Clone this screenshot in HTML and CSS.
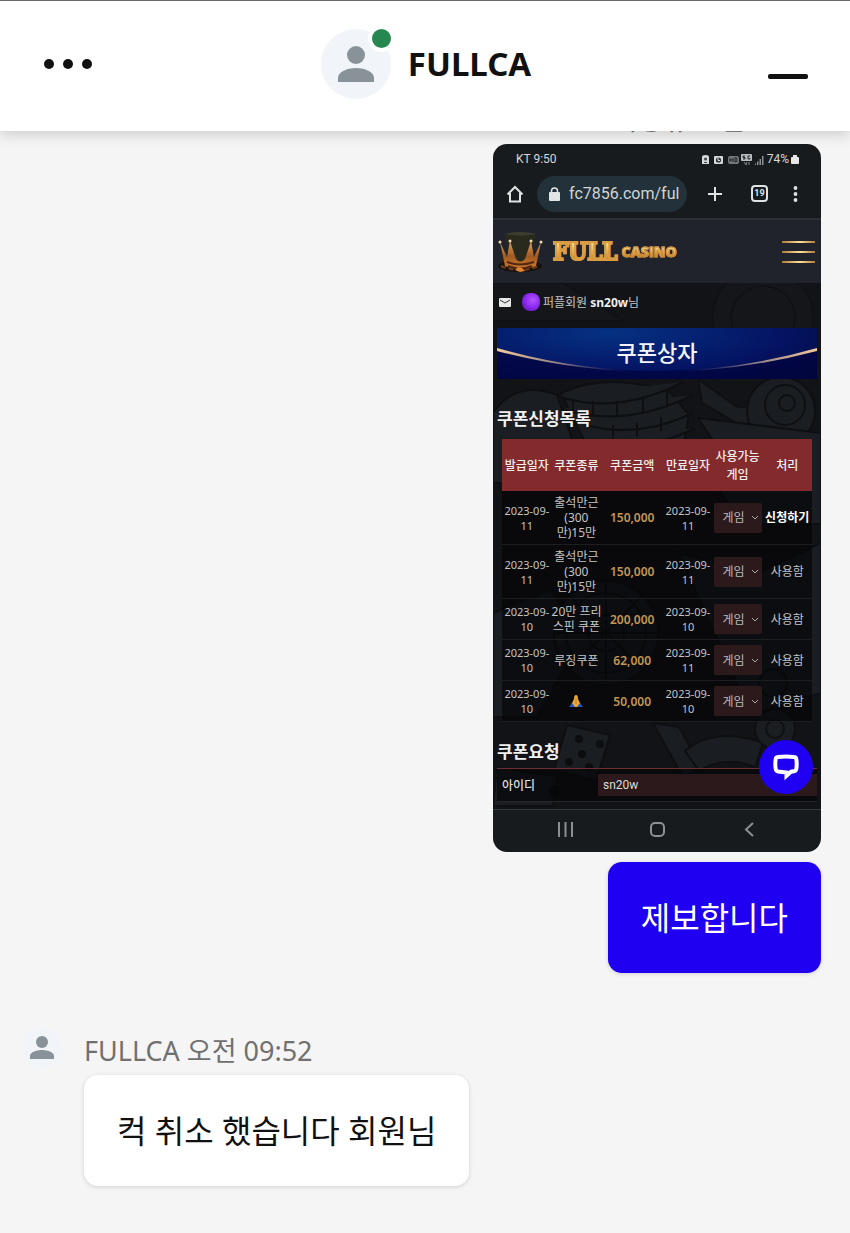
FILE: index.html
```html
<!DOCTYPE html>
<html lang="ko">
<head>
<meta charset="utf-8">
<meta name="viewport" content="width=device-width, initial-scale=1">
<title>FULLCA</title>
<link rel="stylesheet" href="styles.css">
</head>
<body>
<header class="topbar">
  <button class="icon-btn" aria-label="메뉴"><svg width="48" height="12" viewBox="0 0 48 12" fill="#111"><circle cx="5" cy="6" r="5"/><circle cx="24" cy="6" r="5"/><circle cx="43" cy="6" r="5"/></svg></button>
  <div class="agent">
    <div class="avatar">
      <svg width="36" height="36" viewBox="0 0 36 36" fill="#899299"><circle cx="18" cy="9" r="9"/><path d="M0 36v-4c0-7 11-10 18-10s18 3 18 10v4z"/></svg>
      <span class="online"></span>
    </div>
    <h1 class="agent-name">FULLCA</h1>
  </div>
  <button class="icon-btn icon-min" aria-label="최소화"><svg width="40" height="5" viewBox="0 0 40 5"><rect width="40" height="5" rx="2" fill="#111"/></svg></button>
</header>

<main class="chat">
  <section class="group group-own">
    <p class="stamp">사용유 오전 09:50</p>
    <div class="phone">
      <div class="status">
        <span>KT 9:50</span>
        <span class="status-right">
          <svg width="64" height="12" viewBox="0 0 64 12" fill="#d5d8da"><path d="M1 10V3q0-2 3.500-2T8 3v7z"/><circle cx="4.500" cy="5" r="1.500" fill="#444"/><path d="M3 8h3v1H3z" fill="#444"/><rect x="13" y="2" width="9" height="8" rx="1"/><circle cx="17.500" cy="6" r="2.600" fill="#333"/><path d="M17 4v2.500h2" stroke="#ddd" fill="none"/><rect x="27" y="2" width="11" height="8" rx="2" fill="#74787a"/><path d="M29 4v4m3-4v4m-3-2h3m2-2v4q3 0 2-3t-2-1" stroke="#222" fill="none"/><rect x="40" y="0" width="11" height="7" rx="1" fill="#b8bcbe"/><path d="M44 2h-2v1.500h2V5h-2m7-3h-2v3h2V4" stroke="#222" fill="none"/><path d="M43 8l2 3 1-3m2 3V8" stroke="#888" fill="none"/><path d="M54 11V9.500h1V11zm2 0V7.500h1.500V11zm2.500 0V5H60v6zm2.500 0V2h1.500v9z" fill="#8d9193"/></svg>
          <span>74%</span>
          <svg width="8" height="11" viewBox="0 0 8 11" fill="#e6e6e6"><rect y="3" width="8" height="7" rx="1"/><rect x="2" y="1" width="4" height="2"/></svg>
        </span>
      </div>
      <div class="browser">
        <svg width="18" height="18" viewBox="0 0 18 18" fill="none" stroke="#dfe2e3" stroke-width="2"><path d="M1.500 9.500L9 2l7.500 7.500M4 8v8.500h10V8"/></svg>
        <div class="url">
          <svg width="11" height="14" viewBox="0 0 11 14"><rect y="5" width="11" height="9" rx="1" fill="#e2e5e6"/><path d="M2.500 6V4q0-3 3-3t3 3v2" stroke="#e2e5e6" stroke-width="1.500" fill="none"/></svg>
          <span>fc7856.com/ful</span>
        </div>
        <svg width="16" height="16" viewBox="0 0 16 16" stroke="#dfe2e3" stroke-width="2"><path d="M8 1v14M1 8h14"/></svg>
        <span class="tabs">19</span>
        <svg width="5" height="16" viewBox="0 0 5 16" fill="#dfe2e3"><circle cx="2.500" cy="2" r="1.900"/><circle cx="2.500" cy="8" r="1.900"/><circle cx="2.500" cy="14" r="1.900"/></svg>
      </div>
      <div class="brand">
        <svg width="45" height="42" viewBox="0 0 45 42">
          <defs><linearGradient id="g" x2="0" y2="1"><stop stop-color="#e0a05a"/><stop offset=".55" stop-color="#a05a22"/><stop offset="1" stop-color="#d77a2b"/></linearGradient></defs>
          <ellipse cx="22" cy="35" rx="22" ry="6" fill="#15120f"/><path d="M3 35q19 8 38 0" stroke="#7a3c17" stroke-width="2" stroke-dasharray="5 3" fill="none"/>
          <path d="M7 3q15-4 31 0l-5 28H13z" fill="#292a1d"/><path d="M7 3q15-4 31 0-15 3-31 0z" fill="#3d3d30"/>
          <path d="M2 11l7 15 3-16 6 18q4 5 9 0l6-18 3 16 7-15-5 24q-15 6-31 0z" fill="url(#g)"/>
          <path d="M9 31q13 5 27 0M10 35q13 5 24 0" stroke="#4e2913" stroke-width="2" fill="none"/>
          <g fill="#f2d8ad"><circle cx="2" cy="11" r="1.500"/><circle cx="12" cy="10" r="1.500"/><circle cx="33" cy="10" r="1.500"/><circle cx="43" cy="11" r="1.500"/></g><path d="M17 39l3-3 4 1 3 3-5 1z" fill="#e28431"/>
        </svg>
        <span class="word-full">FULL</span><span class="word-casino">CASINO</span>
        <button class="burger" aria-label="사이트 메뉴"><i></i><i></i><i></i></button>
      </div>
      <div class="site">
        <svg class="art" viewBox="0 0 328 526" preserveAspectRatio="xMidYMin slice" fill="none" stroke="#0c0d10" stroke-width="2">
          <g fill="#20242a">
            <g opacity=".4"><path d="M0 0h70l60 38H0z"/><circle cx="270" cy="35" r="50"/><circle cx="270" cy="35" r="32"/></g>
            <path d="M68 110q50-22 110 0l18 22-10 54q-40 20-80 2z"/><path d="M64 113q60 20 126-14M68 126q64 20 132-14M92 142q54 14 108-12M98 157q54 14 104-12M105 172q50 10 94-10M80 116v12m20-10v14m24-14v14m26-16v14m24-20v14m-54 18v14m24-16v14m24-20v14m-64 18v14m28-16v14m28-20v14"/>
            <path d="M205 96l36 26q12 6 24-4l30-26v40l-34 18-52-30z"/><circle cx="288" cy="128" r="34"/><circle cx="292" cy="122" r="20"/><circle cx="294" cy="120" r="8"/>
            <path d="M0 130q24-34 64-18l30 88H0z"/><path d="M205 135l20 30-22 6 46 70h79V150z"/>
            <path d="M0 330l58-24 30 50-44 78H0z"/><circle cx="113" cy="350" r="52"/><circle cx="113" cy="350" r="40"/><circle cx="113" cy="350" r="18"/><path d="M113 298v104M61 350h104M77 313l72 73m0-73l-72 73"/>
            <path d="M186 270l80 20 62-30v150l-70 22z"/><circle cx="280" cy="400" r="14"/>
            <path d="M74 442l43 10-14 46-42-11zM160 440l26 4 22 40-18 10zM4 485l60 8-4 30H0z"/>
            <path d="M192 468q30-25 78-8l-8 24q-30-12-56 4z"/><circle cx="282" cy="446" r="20"/><circle cx="282" cy="446" r="9"/>
          </g>
          <g fill="#090a0c" stroke="none"><circle cx="86" cy="456" r="4"/><circle cx="107" cy="461" r="4"/><circle cx="89" cy="471" r="4"/><circle cx="76" cy="479" r="4"/><circle cx="96" cy="484" r="4"/><circle cx="62" cy="508" r="6"/></g>
        </svg>
        <div class="member">
          <svg width="12" height="9" viewBox="0 0 12 9"><rect width="12" height="9" rx="1" fill="#e9e9e9"/><path d="M1 2l5 3 5-3" stroke="#333" fill="none"/></svg>
          <span class="gem"></span>
          <span>퍼플회원 <b>sn20w</b>님</span>
        </div>
        <div class="banner">
          <svg class="swoosh" viewBox="0 0 320 51" preserveAspectRatio="none">
            <defs><linearGradient id="l"><stop stop-color="#f4c99a"/><stop offset=".2" stop-color="#8e7c86"/><stop offset=".42" stop-color="#233084" stop-opacity="0"/><stop offset=".58" stop-color="#233084" stop-opacity="0"/><stop offset=".8" stop-color="#8e7c86"/><stop offset="1" stop-color="#f4c99a"/></linearGradient></defs>
            <path d="M0 22q160 42 320 0v29H0z" fill="#02043f" opacity=".75"/><path d="M0 20q160 46 320 0v3q-160 42-320 0z" fill="url(#l)"/>
          </svg>
          <h2>쿠폰상자</h2>
        </div>
        <h3 class="heading">쿠폰신청목록</h3>
        <table class="coupons">
          <colgroup><col class="c-date"><col class="c-kind"><col class="c-sum"><col class="c-date"><col class="c-kind"><col class="c-kind"></colgroup>
          <thead><tr><th>발급일자</th><th>쿠폰종류</th><th>쿠폰금액</th><th>만료일자</th><th>사용가능<br>게임</th><th>처리</th></tr></thead>
          <tbody>
            <tr><td class="date">2023-09-<br>11</td><td>출석만근<br>(300<br>만)15만</td><td class="sum">150,000</td><td class="date">2023-09-<br>11</td><td><select aria-label="게임 1"><option>게임</option></select></td><td><button class="apply">신청하기</button></td></tr>
            <tr><td class="date">2023-09-<br>11</td><td>출석만근<br>(300<br>만)15만</td><td class="sum">150,000</td><td class="date">2023-09-<br>11</td><td><select aria-label="게임 2"><option>게임</option></select></td><td>사용함</td></tr>
            <tr><td class="date">2023-09-<br>10</td><td>20만 프리<br>스핀 쿠폰</td><td class="sum">200,000</td><td class="date">2023-09-<br>10</td><td><select aria-label="게임 3"><option>게임</option></select></td><td>사용함</td></tr>
            <tr><td class="date">2023-09-<br>10</td><td>루징쿠폰</td><td class="sum">62,000</td><td class="date">2023-09-<br>11</td><td><select aria-label="게임 4"><option>게임</option></select></td><td>사용함</td></tr>
            <tr><td class="date">2023-09-<br>10</td><td><svg class="pray" width="14" height="13" viewBox="0 0 14 13" role="img" aria-label="기도"><path d="M7 0q2 0 2 4l3 6-3 2H5l-3-2 3-6q0-4 2-4z" fill="#e9a83a"/><path d="M7 3v6" stroke="#c08028"/><path d="M0 12l3-4 3 4zM14 12l-3-4-3 4z" fill="#2454b8"/></svg></td><td class="sum">50,000</td><td class="date">2023-09-<br>10</td><td><select aria-label="게임 5"><option>게임</option></select></td><td>사용함</td></tr>
          </tbody>
        </table>
        <h3 class="heading heading-form">쿠폰요청</h3>
        <div class="field"><label for="uid">아이디</label><input id="uid" type="text" value="sn20w" readonly></div>
        <button class="fab" aria-label="채팅"><svg width="28" height="28" viewBox="0 0 28 28" fill="none" stroke="#fff" stroke-width="4"><path d="M6 4q8-1 16 0 2 0 2.300 2 .8 5 0 10-.3 2-2.300 2.300l-3 .4-4.500 4V19.500l-8.500-1Q4 18 3.700 16q-.8-5 0-10Q4 4 6 4z"/></svg></button>
      </div>
      <div class="navbar">
        <svg width="15" height="15" viewBox="0 0 15 15" stroke="#8d9092" stroke-width="2"><path d="M1 0v15M7.500 0v15M14 0v15"/></svg>
        <svg width="15" height="15" viewBox="0 0 15 15" fill="none" stroke="#8d9092" stroke-width="2"><rect x="1" y="1" width="13" height="13" rx="4"/></svg>
        <svg width="15" height="15" viewBox="0 0 15 15" fill="none" stroke="#8d9092" stroke-width="2"><path d="M11 1L4 7.500l7 6.500"/></svg>
      </div>
    </div>
    <p class="bubble bubble-own">제보합니다</p>
  </section>

  <section class="group group-agent">
    <svg class="mini" width="40" height="48" viewBox="0 0 40 48"><circle cx="20" cy="24" r="20" fill="#f1f5f9"/><g fill="#899299"><circle cx="20" cy="18" r="6"/><path d="M8 35v-3c0-4 7-6 12-6s12 2 12 6v3z"/></g></svg>
    <div class="stack">
      <p class="stamp">FULLCA 오전 09:52</p>
      <p class="bubble">컥 취소 했습니다 회원님</p>
    </div>
  </section>
</main>
</body>
</html>
```
FILE: styles.css
```css
* { box-sizing: border-box; margin: 0; padding: 0; }
body {
  height: 100vh;
  display: flex;
  flex-direction: column;
  overflow: hidden;
  background: #f5f5f5;
  color: #111;
  font-family: "Noto Sans", "Noto Sans CJK KR", sans-serif;
}
button { border: 0; background: none; font: inherit; color: inherit; cursor: pointer; }
svg { display: block; flex: none; }

.topbar {
  flex: none;
  height: 131px;
  padding: 0 41px 4px 43px;
  display: grid;
  grid-template-columns: 1fr auto 1fr;
  align-items: center;
  background: #fff;
  border-top: 1px solid #66666b;
  box-shadow: 0 3px 14px rgba(0, 0, 0, .18);
  position: relative;
  z-index: 2;
}
.icon-btn { justify-self: start; padding: 8px 1px; }
.icon-min { justify-self: end; padding-top: 32px; }
.agent { display: flex; align-items: center; gap: 17px; }
.avatar {
  position: relative;
  width: 70px;
  height: 70px;
  border-radius: 50%;
  background: #f1f5f9;
  display: grid;
  place-items: center;
}
.online {
  position: absolute;
  top: -4px;
  right: -4px;
  width: 27px;
  height: 27px;
  border: 4px solid #fff;
  border-radius: 50%;
  background: #268750;
}
.agent-name { font-size: 33px; line-height: 40px; }

.chat {
  flex: 1;
  min-height: 0;
  padding: 0 29px 47px;
  display: flex;
  flex-direction: column;
  justify-content: flex-end;
  gap: 60px;
}
.group { display: flex; flex: none; }
.group-own { flex-direction: column; align-items: flex-end; }
.group-agent { gap: 22px; margin-left: -7px; align-items: flex-start; }
.mini { margin-top: -9px; }
.stamp { font-size: 27px; line-height: 36px; margin-bottom: 6px; color: #707070; }
.bubble {
  width: fit-content;
  padding: 34px 33px;
  font-size: 32px;
  line-height: 43px;
  border-radius: 14px;
  background: #fff;
  box-shadow: 0 1px 4px rgba(0, 0, 0, .15);
}
.bubble-own { margin-top: 10px; background: #2000f0; color: #fff; }

.phone {
  width: 328px;
  max-width: 100%;
  border-radius: 14px;
  overflow: hidden;
  background: #171b1e;
  color: #c4c4c4;
  font-size: 12px;
  line-height: 15px;
}
.status {
  height: 31px;
  padding: 0 22px 0 23px;
  display: flex;
  justify-content: space-between;
  align-items: center;
  font-family: Roboto, sans-serif;
  color: #d5d8da;
}
.status-right { display: flex; align-items: center; gap: 2px; }
.browser {
  height: 45px;
  padding: 0 23px 6px 13px;
  display: flex;
  align-items: center;
  border-bottom: 2px solid #2c3133;
  font-family: Roboto, sans-serif;
}
.url {
  flex: 1;
  height: 36px;
  margin: 0 20px 0 13px;
  padding-left: 12px;
  display: flex;
  align-items: center;
  gap: 9px;
  border-radius: 18px;
  background: #22313a;
  color: #d0d5d7;
  font-size: 16px;
  line-height: 20px;
  white-space: nowrap;
  overflow: hidden;
}
.tabs {
  width: 17px;
  height: 17px;
  margin: 0 25px 0 28px;
  border: 2px solid #dfe2e3;
  border-radius: 4px;
  font-size: 9px;
  font-weight: 700;
  line-height: 13px;
  text-align: center;
  color: #dfe2e3;
}
.brand {
  height: 63px;
  padding: 0 6px 0 5px;
  display: flex;
  align-items: center;
  background: #20232b;
}
.word-full, .word-casino {
  background: linear-gradient(#f8dc91 25%, #dc9c3c 60%, #a3621c);
  -webkit-background-clip: text;
  background-clip: text;
  color: transparent;
}
.word-full { margin-left: 10px; font: 700 24px/34px "DejaVu Serif Condensed", "DejaVu Serif", serif; -webkit-text-stroke: 2px #d99c42; }
.word-casino { margin-left: 4px; font: 800 14px/20px "Open Sans", sans-serif; -webkit-text-stroke: 1px #c98a3a; }
.burger { margin-left: auto; width: 33px; display: grid; gap: 8px; }
.burger i { height: 2px; background: linear-gradient(90deg, #b07a35, #ffe09a 55%, #b07a35); }

.site { position: relative; height: 526px; background: #121316; padding: 0 4px; }
.site > * { position: relative; }
.site > .art { position: absolute; inset: 0; width: 100%; height: 100%; opacity: .6; }
.member { height: 38px; padding-left: 2px; display: flex; align-items: center; }
.member b { color: #eee; }
.gem {
  width: 18px;
  height: 18px;
  margin: 0 3px 0 11px;
  border-radius: 8px;
  background: radial-gradient(circle at 60% 40%, #b455ff, #8a28f0 50%, #4b148f);
}
.banner {
  height: 51px;
  margin-top: 7px;
  padding-bottom: 4px;
  display: grid;
  place-items: center;
  background: radial-gradient(ellipse at 35% 10%, #063183, #041362 60%, #020a3a);
}
.swoosh { position: absolute; inset: 0; width: 100%; height: 100%; }
.banner h2 { position: relative; font-size: 22px; line-height: 28px; font-weight: 500; color: #f4f4ff; }
.heading { margin-top: 28px; line-height: 24px; font-size: 17px; color: #f0f0f0; }
.coupons {
  width: calc(100% - 10px);
  margin: 8px 5px 0;
  table-layout: fixed;
  border-collapse: collapse;
  background: rgba(4, 4, 5, .6);
  text-align: center;
}
.c-date { width: 16%; }
.c-kind { width: 16%; }
.c-sum { width: 20%; }
.coupons th { height: 52px; padding-top: 2px; background: #832a2c; color: #eee; font-weight: 500; line-height: 18px; white-space: nowrap; }
.coupons td { height: 41px; padding: 4px 0; border-bottom: 1px solid #1c1e20; white-space: nowrap; }
.coupons .date { font-size: 11px; }
.coupons .sum { color: #c49653; font-weight: 600; }
.pray { margin: 0 auto; }
.coupons select {
  appearance: none;
  display: block;
  width: 48px;
  height: 30px;
  margin: 0 auto;
  padding-left: 9px;
  border: 0;
  border-radius: 2px;
  font: inherit;
  color: #bbb;
  background: #2b191b url("data:image/svg+xml,%3Csvg xmlns='http://www.w3.org/2000/svg' width='8' height='5' fill='none' stroke='%23aaa'%3E%3Cpath d='M1 1l3 3 3-3'/%3E%3C/svg%3E") no-repeat right 3px center;
}
.apply { font-weight: 700; color: #fff; }
.heading-form { margin-top: 17px; padding-bottom: 4px; line-height: 25px; border-bottom: 1px solid #6d2f31; }
.field {
  display: flex;
  align-items: center;
  padding: 5px 0 5px 5px;
  background: rgba(4, 4, 5, .6);
  border-bottom: 1px solid #242628;
  color: #ddd;
}
.field label { width: 96px; font-weight: 500; }
.field input {
  flex: 1;
  min-width: 0;
  height: 22px;
  padding: 0 5px;
  border: 0;
  background: #2b191b;
  color: #ddd;
  font: 12px/20px Roboto, sans-serif;
}
.site > .fab {
  position: absolute;
  right: 8px;
  bottom: 15px;
  width: 54px;
  height: 54px;
  border-radius: 50%;
  background: #2000f0;
  display: grid;
  place-items: center;
}
.navbar {
  height: 43px;
  padding: 0 64px 3px 65px;
  display: flex;
  justify-content: space-between;
  align-items: center;
  border-top: 1px solid #333b3b;
}
```
